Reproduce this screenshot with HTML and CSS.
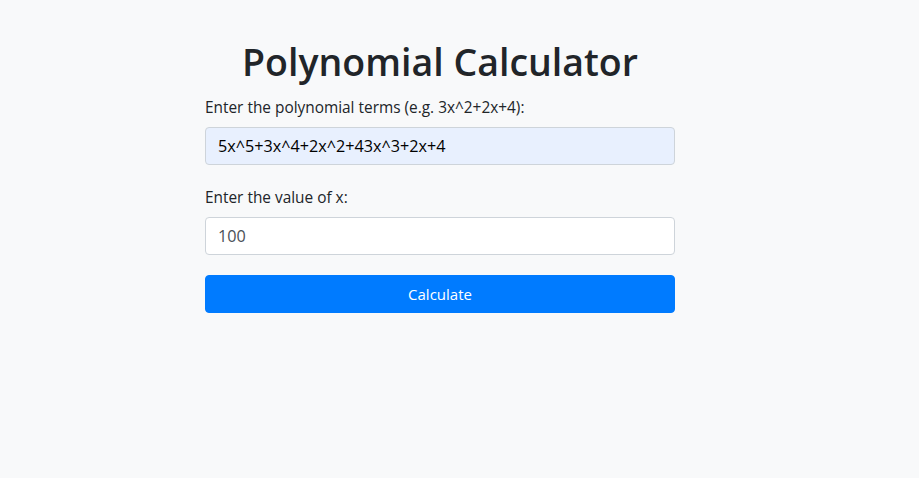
FILE: index.html
```html
<!DOCTYPE html>
<html lang="en">
<head>
<meta charset="utf-8">
<title>Polynomial Calculator</title>
<link rel="stylesheet" href="styles.css">
</head>
<body>
<main class="container">
  <h1 class="title">Polynomial Calculator</h1>
  <form class="calc-form">
    <div class="form-group">
      <label class="form-label" for="terms">Enter the polynomial terms (e.g. 3x^2+2x+4):</label>
      <input class="form-control autofilled" id="terms" type="text" value="5x^5+3x^4+2x^2+43x^3+2x+4">
    </div>
    <div class="form-group form-group-last">
      <label class="form-label" for="xval">Enter the value of x:</label>
      <input class="form-control muted" id="xval" type="text" value="100">
    </div>
    <button class="btn-primary" type="button">Calculate</button>
  </form>
</main>
</body>
</html>
```
FILE: styles.css
```css
* { box-sizing: border-box; }
html, body { margin: 0; }
body {
  background: #f8f9fa;
  color: #212529;
  font-family: "Open Sans", "Noto Sans", sans-serif;
  font-size: 16px;
  line-height: 1.5;
}
.container {
  width: 470px;
  margin-left: 205px;
  padding-top: 38px;
}
.title {
  margin: 0 0 10px;
  font-size: 37.5px;
  font-weight: 600;
  line-height: 48px;
  text-align: center;
}
.calc-form { margin: 0; }
.form-group { margin-bottom: 21px; }
.form-group-last { margin-bottom: 20px; }
.form-label {
  display: block;
  margin-bottom: 7px;
  font-size: 15.4px;
  line-height: 24px;
}
.form-control {
  display: block;
  width: 100%;
  height: 38px;
  padding: 6px 12px;
  font-family: inherit;
  font-size: 16.2px;
  color: #495057;
  background: #fff;
  border: 1px solid #ced4da;
  border-radius: 4px;
  outline: none;
}
.form-control.autofilled {
  background: #e8f0fe;
  color: #000;
}
.btn-primary {
  display: block;
  width: 100%;
  height: 38px;
  margin: 0;
  padding: 6px 12px;
  font-family: inherit;
  font-size: 15px;
  color: #fff;
  background: #007bff;
  border: 1px solid #007bff;
  border-radius: 4px;
}
```
